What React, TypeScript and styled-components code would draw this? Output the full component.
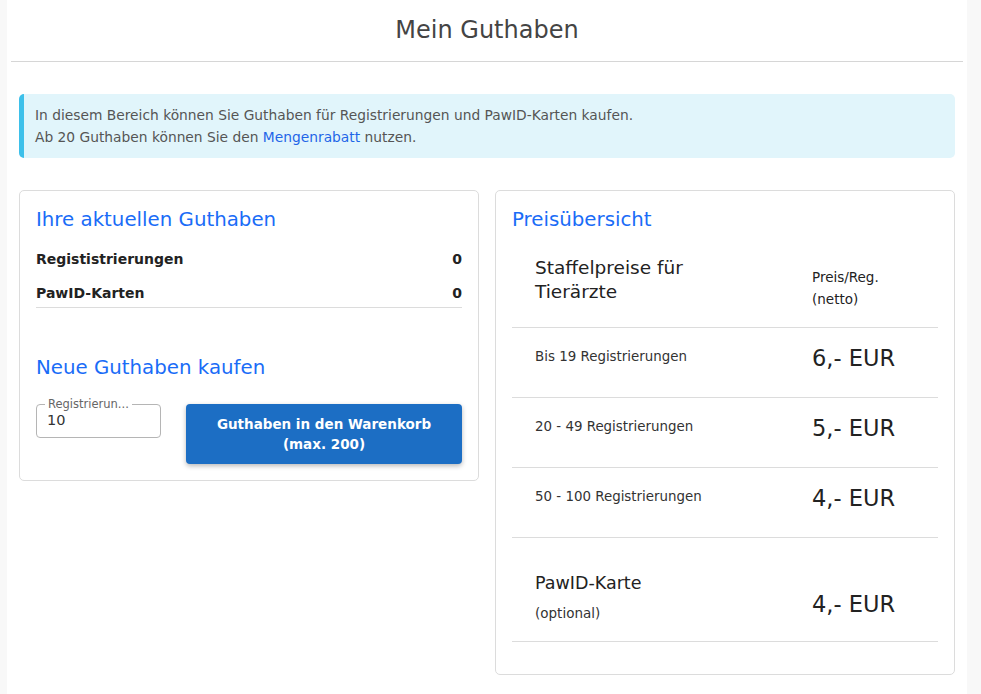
import React from "react"
import styled, { createGlobalStyle } from "styled-components"

const GlobalStyle = createGlobalStyle`
  body {
    margin: 0;
    background: #f8f8f8;
    font-family: "DejaVu Sans", "Liberation Sans", sans-serif;
    color: #222;
  }
`

const Page = styled.div`
  width: 960px;
  min-height: 100vh;
  margin-left: 7px;
  background: #fff;
`

const Header = styled.header`
  margin: 0 4px;
  padding: 15px 0 16px;
  border-bottom: 1px solid #d6d6d6;
`

const Title = styled.h1`
  margin: 0;
  font-size: 24px;
  line-height: 30px;
  font-weight: 400;
  color: #444;
  text-align: center;
`

const Content = styled.main`
  padding: 32px 12px 20px;
`

const Alert = styled.div`
  padding: 10px 16px 10px 11px;
  border-left: 5px solid #3dc0ea;
  border-radius: 5px;
  background: #e1f5fb;
  color: #555;
  font-size: 13.8px;
  line-height: 22px;
  margin-bottom: 32px;
`

const TextLink = styled.a`
  color: #1f66e8;
  text-decoration: none;
`

const Columns = styled.div`
  display: grid;
  grid-template-columns: 1fr 1fr;
  gap: 16px;
  align-items: start;
`

const Card = styled.section`
  border: 1px solid #dcdcdc;
  border-radius: 5px;
  padding: 15px 16px 16px;
`

const CardTitle = styled.h2<{ $top?: number; $bottom?: number }>`
  margin: ${p => p.$top ?? 0}px 0 ${p => p.$bottom ?? 8}px;
  font-size: 19.8px;
  line-height: 28px;
  font-weight: 400;
  color: #1a6cf7;
`

const BalanceRow = styled.div<{ $last?: boolean }>`
  display: flex;
  justify-content: space-between;
  padding: 5px 0 ${p => (p.$last ? 2 : 5)}px;
  font-size: 14px;
  line-height: 24px;
  font-weight: 700;
  color: #222;
  border-bottom: ${p => (p.$last ? "1px solid #dcdcdc" : "none")};
`

const BuyRow = styled.div`
  display: flex;
  align-items: flex-start;
  gap: 25px;
  margin-top: 22px;
`

const Field = styled.fieldset`
  box-sizing: border-box;
  width: 125px;
  height: 40px;
  margin: -6px 0 0;
  padding: 0 10px;
  border: 1px solid #b5b5b5;
  border-radius: 4px;
`

const FieldLabel = styled.legend`
  padding: 0 3px;
  margin-left: -2px;
  font-size: 11.5px;
  line-height: 12px;
  color: #666;
  white-space: nowrap;
`

const FieldInput = styled.input`
  width: 100%;
  border: none;
  outline: none;
  padding: 0;
  margin: 2px 0 0;
  font-family: inherit;
  font-size: 14.5px;
  color: #333;
  background: transparent;
`

const CartButton = styled.button`
  flex: 1;
  height: 60px;
  border: none;
  border-radius: 4px;
  background: #1c6ec4;
  color: #fff;
  font-family: inherit;
  font-size: 13.5px;
  font-weight: 700;
  line-height: 20px;
  box-shadow: 0 2px 5px rgba(0, 0, 0, 0.28);
  cursor: pointer;
`

const PriceTable = styled.div`
  display: grid;
  grid-template-columns: 300px 1fr;
  margin-bottom: 16px;
`

const HeadCell = styled.div<{ $pt: number; $size: number; $lh: number; $pad?: boolean }>`
  box-sizing: border-box;
  height: 86px;
  padding: ${p => p.$pt}px 0 0 ${p => (p.$pad ? 23 : 0)}px;
  font-size: ${p => p.$size}px;
  line-height: ${p => p.$lh}px;
  color: #222;
  border-bottom: 1px solid #dcdcdc;
`

const Cell = styled.div<{ $pad?: boolean; $tall?: boolean; $pt?: number }>`
  box-sizing: border-box;
  height: ${p => (p.$tall ? 104 : 70)}px;
  padding: ${p => p.$pt ?? 18}px 0 0 ${p => (p.$pad ? 23 : 0)}px;
  border-bottom: 1px solid #dcdcdc;
`

const RangeLabel = styled.span`
  font-size: 13.4px;
  line-height: 20px;
  color: #333;
`

const Price = styled.span`
  font-size: 22.5px;
  line-height: 24px;
  color: #222;
`

const CardName = styled.div`
  font-size: 17.5px;
  line-height: 26px;
  color: #222;
`

const CardNote = styled.div`
  margin-top: 6px;
  font-size: 13.5px;
  line-height: 22px;
  color: #333;
`

const tiers = [
  { label: "Bis 19 Registrierungen", price: "6,- EUR" },
  { label: "20 - 49 Registrierungen", price: "5,- EUR" },
  { label: "50 - 100 Registrierungen", price: "4,- EUR" },
]

export default function App() {
  return (
    <>
      <GlobalStyle />
      <Page>
        <Header>
          <Title>Mein Guthaben</Title>
        </Header>
        <Content>
          <Alert>
            In diesem Bereich können Sie Guthaben für Registrierungen und PawID-Karten kaufen.
            <br />
            Ab 20 Guthaben können Sie den <TextLink href="#">Mengenrabatt</TextLink> nutzen.
          </Alert>
          <Columns>
            <Card>
              <CardTitle>Ihre aktuellen Guthaben</CardTitle>
              <BalanceRow>
                <span>Regististrierungen</span>
                <span>0</span>
              </BalanceRow>
              <BalanceRow $last>
                <span>PawID-Karten</span>
                <span>0</span>
              </BalanceRow>
              <CardTitle $top={46} $bottom={0}>
                Neue Guthaben kaufen
              </CardTitle>
              <BuyRow>
                <Field>
                  <FieldLabel>Registrierun...</FieldLabel>
                  <FieldInput defaultValue="10" />
                </Field>
                <CartButton>
                  Guthaben in den Warenkorb
                  <br />
                  (max. 200)
                </CartButton>
              </BuyRow>
            </Card>
            <Card>
              <CardTitle>Preisübersicht</CardTitle>
              <PriceTable>
                <HeadCell $pt={14} $size={18.5} $lh={24} $pad>
                  Staffelpreise für
                  <br />
                  Tierärzte
                </HeadCell>
                <HeadCell $pt={24} $size={13.5} $lh={22}>
                  Preis/Reg.
                  <br />
                  (netto)
                </HeadCell>
                {tiers.map(t => (
                  <React.Fragment key={t.label}>
                    <Cell $pad>
                      <RangeLabel>{t.label}</RangeLabel>
                    </Cell>
                    <Cell>
                      <Price>{t.price}</Price>
                    </Cell>
                  </React.Fragment>
                ))}
                <Cell $pad $tall $pt={32}>
                  <CardName>PawID-Karte</CardName>
                  <CardNote>(optional)</CardNote>
                </Cell>
                <Cell $tall $pt={54}>
                  <Price>4,- EUR</Price>
                </Cell>
              </PriceTable>
            </Card>
          </Columns>
        </Content>
      </Page>
    </>
  )
}
